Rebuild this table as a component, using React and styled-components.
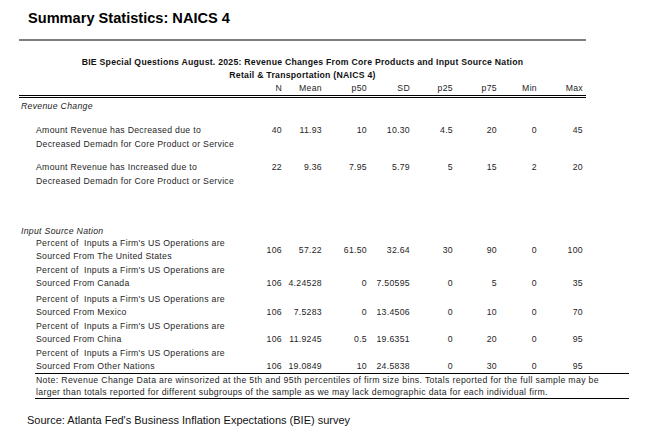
import React from 'react'
import styled, { createGlobalStyle } from 'styled-components'

const GlobalStyle = createGlobalStyle`
  body {
    margin: 0;
    background: #fff;
  }
`

const Page = styled.div`
  width: 650px;
  height: 446px;
  overflow: hidden;
  background: #fff;
  font-family: 'Liberation Sans', Arial, sans-serif;
  color: #000;
`
const Title = styled.h1`
  margin: 9px 0 0 28px;
  font-size: 14.6px;
  line-height: 18px;
  font-weight: bold;
`
const TopRule = styled.div`
  margin: 12px 0 0 19px;
  width: 567px;
  height: 2px;
  background: #7f7f7f;
`
const Table = styled.section`
  margin: 15px 0 0 19px;
  width: 610px;
  font-size: 8.7px;
  letter-spacing: 0.3px;
  color: #1e1e1e;
`
const Caption = styled.div`
  width: 567px;
  text-align: center;
  font-weight: bold;
  letter-spacing: 0.25px;
  line-height: 13px;
  color: #111;
`
const Head = styled.div`
  width: 551px;
  padding-left: 16px;
  border-bottom: 3px double #000;
`
const Section = styled.div`
  margin-top: ${p => p.$top}px;
  padding-left: 2px;
  font-style: italic;
  line-height: ${p => p.$lh}px;
`
const Body = styled.div`
  padding-left: 16px;
`
const Row = styled.div`
  display: grid;
  grid-template-columns: 230px 17px 40px 45px 43px 43px 44px 40px 46px 1fr;
  width: ${p => (p.$head ? 551 : 594)}px;
  margin-top: ${p => p.$top || 0}px;
  line-height: ${p => p.$lh || 13}px;
  border-bottom: ${p => (p.$rule ? '1px solid #000' : 'none')};
`
const Label = styled.div`
  white-space: pre;
  padding-left: 1px;
`
const Cell = styled.div`
  text-align: right;
  white-space: nowrap;
  align-self: ${p => p.$align || 'start'};
`
const Note = styled.div`
  width: 593px;
  padding-left: 1px;
  line-height: 12px;
  letter-spacing: 0.35px;
  white-space: nowrap;
  border-bottom: 1px solid #000;
`
const Source = styled.p`
  margin: 14px 0 0 27px;
  font-size: 11px;
  line-height: 14px;
  color: #111;
`

const columns = ['N', 'Mean', 'p50', 'SD', 'p25', 'p75', 'Min', 'Max']

const revenue = [
  {
    label: 'Amount Revenue has Decreased due to\nDecreased Demadn for Core Product or Service',
    values: ['40', '11.93', '10', '10.30', '4.5', '20', '0', '45'],
    top: 10,
  },
  {
    label: 'Amount Revenue has Increased due to\nDecreased Demadn for Core Product or Service',
    values: ['22', '9.36', '7.95', '5.79', '5', '15', '2', '20'],
    top: 9,
  },
]

const prefix = "Percent of  Inputs a Firm's US Operations are\n"

const nations = [
  {
    label: prefix + 'Sourced From The United States',
    values: ['106', '57.22', '61.50', '32.64', '30', '90', '0', '100'],
    align: 'center',
    top: 0,
  },
  {
    label: prefix + 'Sourced From Canada',
    values: ['106', '4.24528', '0', '7.50595', '0', '5', '0', '35'],
    top: 1,
  },
  {
    label: prefix + 'Sourced From Mexico',
    values: ['106', '7.5283', '0', '13.4506', '0', '10', '0', '70'],
    top: 3,
  },
  {
    label: prefix + 'Sourced From China',
    values: ['106', '11.9245', '0.5', '19.6351', '0', '20', '0', '95'],
    top: 1,
  },
  {
    label: prefix + 'Sourced From Other Nations',
    values: ['106', '19.0849', '10', '24.5838', '0', '30', '0', '95'],
    top: 1,
    rule: true,
  },
]

const DataRow = ({ row, lh, align }) => (
  <Row $top={row.top} $lh={lh} $rule={row.rule}>
    <Label>{row.label}</Label>
    {row.values.map((v, i) => (
      <Cell key={i} $align={row.align || align}>
        {v}
      </Cell>
    ))}
  </Row>
)

const App = () => (
  <Page>
    <GlobalStyle />
    <Title>Summary Statistics: NAICS 4</Title>
    <TopRule />
    <Table>
      <Caption>
        BIE Special Questions August. 2025: Revenue Changes From Core Products and Input Source Nation
      </Caption>
      <Caption>Retail &amp; Transportation (NAICS 4)</Caption>
      <Head>
        <Row $head>
          <Label />
          {columns.map(c => (
            <Cell key={c}>{c}</Cell>
          ))}
        </Row>
      </Head>
      <Section $top={2} $lh={13}>Revenue Change</Section>
      <Body>
        {revenue.map(r => (
          <DataRow key={r.label} row={r} lh={14} align="start" />
        ))}
      </Body>
      <Section $top={37} $lh={12}>Input Source Nation</Section>
      <Body>
        {nations.map(r => (
          <DataRow key={r.label} row={r} lh={13} align="end" />
        ))}
        <Note>
          Note: Revenue Change Data are winsorized at the 5th and 95th percentiles of firm size bins. Totals reported for the full sample may be
          <br />
          larger than totals reported for different subgroups of the sample as we may lack demographic data for each individual firm.
        </Note>
      </Body>
    </Table>
    <Source>Source: Atlanta Fed's Business Inflation Expectations (BIE) survey</Source>
  </Page>
)

export default App
